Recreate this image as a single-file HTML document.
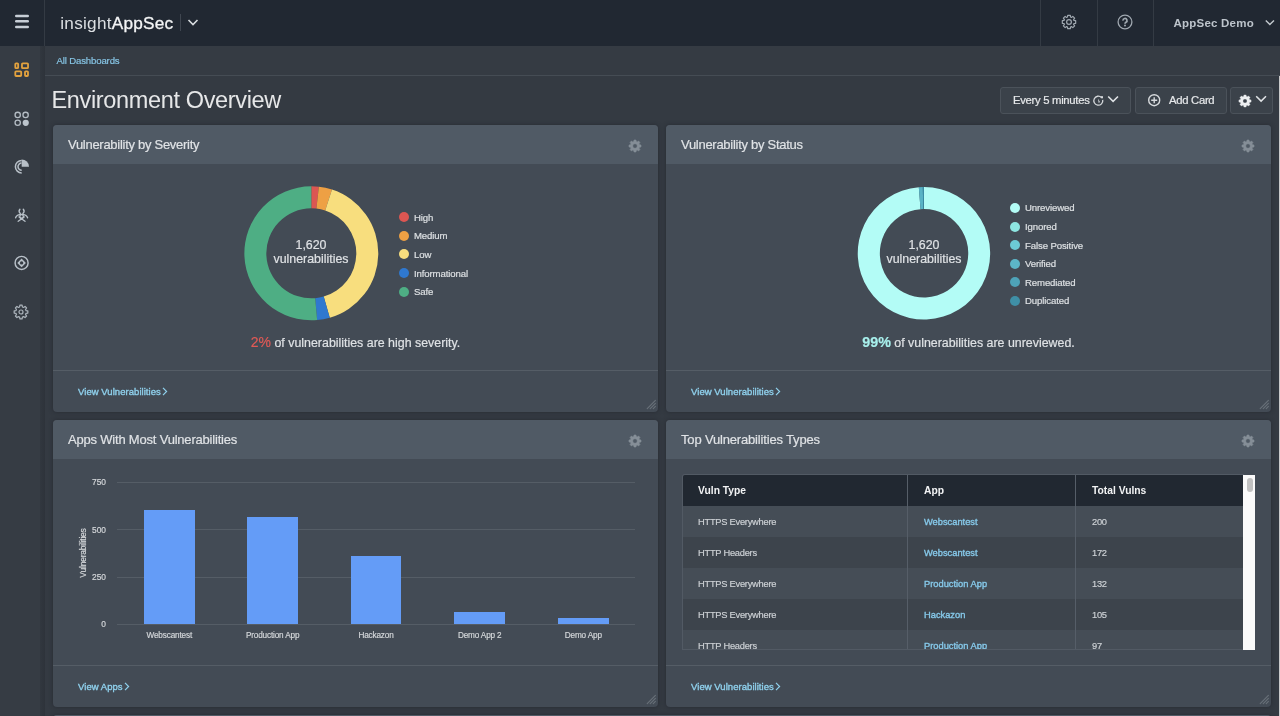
<!DOCTYPE html>
<html><head><meta charset="utf-8">
<style>
*{box-sizing:border-box;margin:0;padding:0}
html,body{width:1280px;height:716px;overflow:hidden;background:#343a42;font-family:"Liberation Sans",sans-serif;color:#e4e6e8}
.abs{position:absolute}
#hdr{position:absolute;left:0;top:0;width:1280px;height:46px;background:#212832;z-index:2}
.vsep{position:absolute;top:0;width:1px;height:46px;background:#343b44}
#side{position:absolute;left:0;top:46px;width:45px;height:670px;background:#363c44}
#side:after{content:"";position:absolute;right:0;top:0;width:5px;height:100%;background:linear-gradient(to right,rgba(40,45,52,.3),rgba(40,45,52,.6))}
#crumb{position:absolute;left:45px;top:46px;width:1235px;height:29px;background:#353b43}
#crumbline{position:absolute;left:45px;top:75px;width:1235px;height:1px;background:#454c54}
.card{position:absolute;width:605px;height:287px;background:#434b55;border-radius:4px;overflow:hidden;box-shadow:0 0 4px rgba(30,34,40,.6)}
.ch{position:absolute;left:0;top:0;width:100%;height:39px;background:#505a65}
.ct{position:absolute;left:15px;top:12.3px;font-size:13px;letter-spacing:-0.28px;color:#e0e3e6;white-space:nowrap}
.fl{position:absolute;left:0;top:245px;width:100%;height:1px;background:#555d66}
.lnk{position:absolute;left:25px;top:261px;font-size:9.5px;font-weight:400;letter-spacing:0.05px;-webkit-text-stroke:0.35px #8fd0ec;color:#8fd0ec;white-space:nowrap;line-height:11px}
.lnk svg{position:relative;top:1px;margin-left:1.4px}
.rh{position:absolute;left:593.3px;top:274px}
.cg{position:absolute;left:575px;top:13.6px}
.btn{position:absolute;top:87px;height:27px;background:#3b424a;border:1px solid #4b525a;border-radius:3px}
.txt{position:absolute;white-space:nowrap}
.ct,.ctr,.sum,.leg,.cell,.xl,.yl,.txt{-webkit-text-stroke:0.18px currentColor}
.dc{position:absolute;left:188px;top:58px}
.ctr{position:absolute;left:158px;top:113px;width:200px;text-align:center;font-size:12.4px;line-height:14px;color:#dfe2e5}
.leg{position:absolute;font-size:9.6px;letter-spacing:-0.12px;color:#dde0e3;white-space:nowrap;line-height:12px}
.leg i{position:absolute;left:-15px;top:0.6px;width:10px;height:10px;border-radius:50%}
.sum{position:absolute;left:0;width:605px;top:208.5px;text-align:center;font-size:12.4px;color:#dfe2e5;white-space:nowrap}
.grid{position:absolute;left:64px;width:518px;height:1px;background:#555d66}
.yl{position:absolute;left:20px;width:33px;text-align:right;font-size:8.4px;color:#d4d7da;line-height:10px}
.bar{position:absolute;width:50.5px;background:#649cf7}
.xl{position:absolute;width:104px;text-align:center;font-size:8.2px;letter-spacing:-0.15px;color:#d4d7da;line-height:10px;top:211px}
.row{position:absolute;left:17px;width:560px;height:31px}
.cell{position:absolute;font-size:9.3px;letter-spacing:-0.25px;color:#cdd1d5;white-space:nowrap;line-height:12px}
.cell.a{font-weight:400;color:#86c9ea;letter-spacing:0;-webkit-text-stroke:0.35px #86c9ea}
.th{position:absolute;font-size:10.3px;font-weight:700;color:#f2f3f4;white-space:nowrap;line-height:12px;top:10.2px}
</style></head><body><div id="root" style="position:absolute;left:0;top:0;width:1280px;height:716px;overflow:hidden;will-change:transform">
<!-- header -->
<div id="hdr">
  <svg class="abs" style="left:14px;top:13px" width="16" height="17" viewBox="0 0 16 17">
    <g stroke="#c7ced6" stroke-width="2.4" stroke-linecap="round"><line x1="2.2" y1="3" x2="13.8" y2="3"/><line x1="2.2" y1="8.2" x2="13.8" y2="8.2"/><line x1="2.2" y1="14" x2="13.8" y2="14"/></g>
  </svg>
  <div class="vsep" style="left:44px"></div>
  <div class="txt" style="left:60.3px;top:12.5px;font-size:17.2px;color:#dcdfe2;letter-spacing:0.25px"><span style="font-weight:400;-webkit-text-stroke:0">insight</span><span style="-webkit-text-stroke:0.3px #f4f5f6;color:#f4f5f6">AppSec</span></div>
  <div class="abs" style="left:180px;top:14px;width:1px;height:17px;background:#3f4650"></div>
  <svg class="abs" style="left:187px;top:18px" width="12" height="9" viewBox="0 0 12 9"><polyline points="1.5,2 6,6.5 10.5,2" fill="none" stroke="#d8dce0" stroke-width="1.6"/></svg>
  <div class="vsep" style="left:1040px"></div>
  <svg class="abs" style="left:1060.6px;top:14.3px" width="16" height="16" viewBox="0 0 16 16"><path d="M6.48 3.03L6.70 1.32L9.30 1.32L9.52 3.03L10.44 3.41L11.80 2.36L13.64 4.20L12.59 5.56L12.97 6.48L14.68 6.70L14.68 9.30L12.97 9.52L12.59 10.44L13.64 11.80L11.80 13.64L10.44 12.59L9.52 12.97L9.30 14.68L6.70 14.68L6.48 12.97L5.56 12.59L4.20 13.64L2.36 11.80L3.41 10.44L3.03 9.52L1.32 9.30L1.32 6.70L3.03 6.48L3.41 5.56L2.36 4.20L4.20 2.36L5.56 3.41Z" fill="none" stroke="#a0a8b0" stroke-width="1.2" stroke-linejoin="round"/><circle cx="8" cy="8" r="2.4" fill="none" stroke="#a0a8b0" stroke-width="1.2"/></svg>
  <div class="vsep" style="left:1097px"></div>
  <svg class="abs" style="left:1117.2px;top:14.3px" width="16" height="16" viewBox="0 0 16 16"><circle cx="8" cy="8" r="6.9" fill="none" stroke="#a0a8b0" stroke-width="1.3"/><path d="M6 6.6a2 2 0 1 1 3 1.6c-.7.4-1 .8-1 1.6" fill="none" stroke="#a0a8b0" stroke-width="1.7"/><circle cx="8" cy="11.6" r="1" fill="#a0a8b0"/></svg>
  <div class="vsep" style="left:1153px"></div>
  <div class="txt" style="left:1173.5px;top:16.8px;font-size:11.5px;font-weight:700;letter-spacing:0.22px;color:#bdc4cb;-webkit-text-stroke:0">AppSec Demo</div>
  <svg class="abs" style="left:1264px;top:18px" width="12" height="9" viewBox="0 0 12 9"><polyline points="1.8,2.4 5.9,6.4 10,2.4" fill="none" stroke="#c3c9ce" stroke-width="1.4"/></svg>
</div>
<div id="side">
  <svg class="abs" style="left:13px;top:15px" width="18" height="18" viewBox="0 0 18 18"><g fill="none" stroke="#e3a23e" stroke-width="1.8"><rect x="2.3" y="2.3" width="2.85" height="4.9" rx="0.8"/><rect x="8.96" y="2.3" width="6.08" height="4.9" rx="0.8"/><rect x="2.3" y="10.3" width="5.9" height="4.7" rx="0.8"/><rect x="12" y="10.3" width="3.0" height="4.7" rx="0.8"/></g></svg>
  <svg class="abs" style="left:13px;top:63.6px" width="18" height="18" viewBox="0 0 18 18"><g fill="none" stroke="#b4bcc4" stroke-width="1.3"><circle cx="4.7" cy="4.9" r="2.65"/><circle cx="12.6" cy="4.9" r="2.65"/><circle cx="4.7" cy="12.8" r="2.65"/></g><circle cx="12.75" cy="12.8" r="3.1" fill="#bcc4cc"/></svg>
  <svg class="abs" style="left:13px;top:113px" width="18" height="18" viewBox="0 0 18 18"><path d="M8.7 7.7V0.4A7.3 7.3 0 0 1 16 7.7Z" fill="#b8c0c8"/><g fill="none" stroke="#b8c0c8" stroke-width="1.5"><path d="M8.7 1.4A6.3 6.3 0 0 0 8.7 14"/><path d="M8.5 4.1A3.6 3.6 0 0 0 8.7 11.3"/></g></svg>
  <svg class="abs" style="left:13px;top:161px" width="18" height="18" viewBox="0 0 18 18"><g fill="none" stroke="#b8c0c8" stroke-width="1.35" stroke-linecap="round"><path d="M6.9 2.3C5.9 3.5 6.1 5.4 7.3 6.5"/><path d="M10.3 2.3C11.3 3.5 11.1 5.4 9.9 6.5"/><path d="M2.6 10.8C3.2 8.7 5.4 7.3 8.6 7.3C11.8 7.3 14 8.7 14.6 10.8"/><circle cx="8.6" cy="9.4" r="1.8"/><path d="M5.2 14.3L11.2 10M12 14.3L6 10"/></g></svg>
  <svg class="abs" style="left:13px;top:208px" width="18" height="18" viewBox="0 0 18 18"><circle cx="8.6" cy="8.9" r="6.5" fill="none" stroke="#b8c0c8" stroke-width="1.45"/><path d="M8.6 4.6L12.9 8.9L8.6 13.2L4.3 8.9Z" fill="#b8c0c8"/><circle cx="8.6" cy="8.9" r="1.7" fill="#363c44"/></svg>
  <svg class="abs" style="left:13.2px;top:258px" width="16" height="16" viewBox="0 0 16 16"><path d="M6.57 3.00L6.92 1.18L9.08 1.18L9.43 3.00L10.52 3.45L12.06 2.42L13.58 3.94L12.55 5.48L13.00 6.57L14.82 6.92L14.82 9.08L13.00 9.43L12.55 10.52L13.58 12.06L12.06 13.58L10.52 12.55L9.43 13.00L9.08 14.82L6.92 14.82L6.57 13.00L5.48 12.55L3.94 13.58L2.42 12.06L3.45 10.52L3.00 9.43L1.18 9.08L1.18 6.92L3.00 6.57L3.45 5.48L2.42 3.94L3.94 2.42L5.48 3.45Z" fill="none" stroke="#abb3bb" stroke-width="1.25" stroke-linejoin="round"/><circle cx="8" cy="8" r="2.0" fill="none" stroke="#abb3bb" stroke-width="1.2"/></svg>
</div>
<div id="crumb"></div>
<div id="crumbline"></div>
<div class="txt" style="left:56.5px;top:55px;font-size:9.6px;letter-spacing:-0.15px;color:#86c4e4">All Dashboards</div>
<div class="txt" style="left:51.5px;top:87px;font-size:23.5px;letter-spacing:-0.35px;color:#e6e7e8;-webkit-text-stroke:0">Environment Overview</div>

<!-- buttons -->
<div class="btn" style="left:1000px;width:131px"></div>
<div class="txt" style="left:1013px;top:94px;font-size:11.3px;letter-spacing:-0.3px;color:#e6e8ea;-webkit-text-stroke:0.2px #e6e8ea">Every 5 minutes</div>
<svg class="abs" style="left:1092px;top:94px" width="13" height="13" viewBox="0 0 13 13"><path d="M10.73 5.92A4.5 4.5 0 1 1 9.48 3.52" fill="none" stroke="#d6d9dc" stroke-width="1.3"/><rect x="8.9" y="2.2" width="2.1" height="2.1" fill="#d6d9dc"/><path d="M5.9 4.6L8 8.1L6.7 8.9Z" fill="#d6d9dc"/></svg>
<svg class="abs" style="left:1107px;top:95px" width="13" height="9" viewBox="0 0 13 9"><polyline points="1.2,1.5 6.1,6.4 11,1.5" fill="none" stroke="#e0e3e6" stroke-width="1.5"/></svg>
<div class="btn" style="left:1135px;width:92px"></div>
<svg class="abs" style="left:1147px;top:93px" width="15" height="15" viewBox="0 0 15 15"><circle cx="7.2" cy="7.2" r="5.5" fill="none" stroke="#d6d9dc" stroke-width="1.4"/><path d="M7.2 4.2V10.2M4.2 7.2H10.2" stroke="#d6d9dc" stroke-width="1.4"/></svg>
<div class="txt" style="left:1169px;top:94px;font-size:11.3px;letter-spacing:-0.3px;color:#e6e8ea;-webkit-text-stroke:0.2px #e6e8ea">Add Card</div>
<div class="btn" style="left:1230px;width:43px"></div>
<svg class="abs" style="left:1237.6px;top:93.6px" width="14" height="14" viewBox="0 0 14 14"><path d="M5.55 2.53L5.92 0.89L8.08 0.89L8.45 2.53L9.13 2.81L10.56 1.92L12.08 3.44L11.19 4.87L11.47 5.55L13.11 5.92L13.11 8.08L11.47 8.45L11.19 9.13L12.08 10.56L10.56 12.08L9.13 11.19L8.45 11.47L8.08 13.11L5.92 13.11L5.55 11.47L4.87 11.19L3.44 12.08L1.92 10.56L2.81 9.13L2.53 8.45L0.89 8.08L0.89 5.92L2.53 5.55L2.81 4.87L1.92 3.44L3.44 1.92L4.87 2.81ZM4.90 7.00a2.1 2.1 0 1 0 4.20 0a2.1 2.1 0 1 0 -4.20 0Z" fill="#eceef0" stroke="#eceef0" stroke-width="0.3" stroke-linejoin="round" fill-rule="evenodd"/></svg>
<svg class="abs" style="left:1254.5px;top:95px" width="12" height="9" viewBox="0 0 12 9"><polyline points="1.2,1.2 6.1,6.1 11,1.2" fill="none" stroke="#e0e3e6" stroke-width="1.5"/></svg>

<!-- card 1 -->
<div class="card" style="left:53px;top:125px">
  <div class="ch"></div>
  <div class="ct">Vulnerability by Severity</div>
  <svg class="cg" width="14" height="14" viewBox="0 0 14 14"><path d="M5.66 2.60L6.05 0.98L7.95 0.98L8.34 2.60L9.16 2.94L10.59 2.06L11.94 3.41L11.06 4.84L11.40 5.66L13.02 6.05L13.02 7.95L11.40 8.34L11.06 9.16L11.94 10.59L10.59 11.94L9.16 11.06L8.34 11.40L7.95 13.02L6.05 13.02L5.66 11.40L4.84 11.06L3.41 11.94L2.06 10.59L2.94 9.16L2.60 8.34L0.98 7.95L0.98 6.05L2.60 5.66L2.94 4.84L2.06 3.41L3.41 2.06L4.84 2.94ZM4.70 7.00a2.3 2.3 0 1 0 4.60 0a2.3 2.3 0 1 0 -4.60 0Z" fill="#858e97" stroke="#858e97" stroke-width="0.6" stroke-linejoin="round" fill-rule="evenodd"/></svg>
  <svg class="dc" width="141" height="141" viewBox="0 0 141 141"><path d="M70.30 3.30A67.0 67.0 0 0 1 77.88 3.73L75.39 25.59A45.0 45.0 0 0 0 70.30 25.30Z" fill="#dc5652"/><path d="M77.88 3.73A67.0 67.0 0 0 1 91.00 6.58L84.21 27.50A45.0 45.0 0 0 0 75.39 25.59Z" fill="#eea044"/><path d="M91.00 6.58A67.0 67.0 0 0 1 88.77 134.70L82.70 113.56A45.0 45.0 0 0 0 84.21 27.50Z" fill="#f8de7e"/><path d="M88.77 134.70A67.0 67.0 0 0 1 76.14 137.05L74.22 115.13A45.0 45.0 0 0 0 82.70 113.56Z" fill="#2f78cf"/><path d="M76.14 137.05A67.0 67.0 0 1 1 70.30 3.30L70.30 25.30A45.0 45.0 0 1 0 74.22 115.13Z" fill="#4eae84"/></svg>
  <div class="ctr">1,620<br>vulnerabilities</div>
  <div class="leg" style="left:361px;top:86.8px"><i style="background:#dc5652"></i>High</div>
  <div class="leg" style="left:361px;top:105.3px"><i style="background:#eea044"></i>Medium</div>
  <div class="leg" style="left:361px;top:123.8px"><i style="background:#f8de7e"></i>Low</div>
  <div class="leg" style="left:361px;top:142.5px"><i style="background:#2f78cf"></i>Informational</div>
  <div class="leg" style="left:361px;top:161.0px"><i style="background:#4eae84"></i>Safe</div>
  <div class="sum"><span style="font-size:14px;color:#e05a56">2%</span> of vulnerabilities are high severity.</div>
  <div class="fl"></div>
  <div class="lnk">View Vulnerabilities<svg width="6" height="9" viewBox="0 0 6 9"><polyline points="1,0.8 4.6,4.5 1,8.2" fill="none" stroke="#8fd0ec" stroke-width="1.2"/></svg></div>
  <svg class="rh" width="11" height="11" viewBox="0 0 11 11"><g stroke="#697179" stroke-width="1.1" stroke-linecap="round"><line x1="1.2" y1="9.6" x2="9.4" y2="1.4"/><line x1="4.2" y1="9.6" x2="9.4" y2="4.4"/><line x1="7.2" y1="9.6" x2="9.4" y2="7.4"/></g></svg>
</div>
<!-- card 2 -->
<div class="card" style="left:666px;top:125px">
  <div class="ch"></div>
  <div class="ct">Vulnerability by Status</div>
  <svg class="cg" width="14" height="14" viewBox="0 0 14 14"><path d="M5.66 2.60L6.05 0.98L7.95 0.98L8.34 2.60L9.16 2.94L10.59 2.06L11.94 3.41L11.06 4.84L11.40 5.66L13.02 6.05L13.02 7.95L11.40 8.34L11.06 9.16L11.94 10.59L10.59 11.94L9.16 11.06L8.34 11.40L7.95 13.02L6.05 13.02L5.66 11.40L4.84 11.06L3.41 11.94L2.06 10.59L2.94 9.16L2.60 8.34L0.98 7.95L0.98 6.05L2.60 5.66L2.94 4.84L2.06 3.41L3.41 2.06L4.84 2.94ZM4.70 7.00a2.3 2.3 0 1 0 4.60 0a2.3 2.3 0 1 0 -4.60 0Z" fill="#858e97" stroke="#858e97" stroke-width="0.6" stroke-linejoin="round" fill-rule="evenodd"/></svg>
  <svg class="dc" width="141" height="141" viewBox="0 0 141 141"><path d="M70.00 4.10A66.2 66.2 0 1 1 64.81 4.30L66.53 26.24A44.2 44.2 0 1 0 70.00 26.10Z" fill="#b3fcf6"/><path d="M64.81 4.30A66.2 66.2 0 0 1 68.84 4.11L69.23 26.11A44.2 44.2 0 0 0 66.53 26.24Z" fill="#58b3c6"/><path d="M68.84 4.11A66.2 66.2 0 0 1 70.00 4.10L70.00 26.10A44.2 44.2 0 0 0 69.23 26.11Z" fill="#3a8ca6"/></svg>
  <div class="ctr">1,620<br>vulnerabilities</div>
  <div class="leg" style="left:359px;top:77.4px"><i style="background:#b3fcf6"></i>Unreviewed</div>
  <div class="leg" style="left:359px;top:96.1px"><i style="background:#8ee6e2"></i>Ignored</div>
  <div class="leg" style="left:359px;top:114.6px"><i style="background:#6ccad6"></i>False Positive</div>
  <div class="leg" style="left:359px;top:133.0px"><i style="background:#5cb6c8"></i>Verified</div>
  <div class="leg" style="left:359px;top:151.6px"><i style="background:#4ea3b8"></i>Remediated</div>
  <div class="leg" style="left:359px;top:170.4px"><i style="background:#3f8fa6"></i>Duplicated</div>
  <div class="sum"><span style="font-size:14.3px;font-weight:700;color:#a8f0ec">99%</span> of vulnerabilities are unreviewed.</div>
  <div class="fl"></div>
  <div class="lnk">View Vulnerabilities<svg width="6" height="9" viewBox="0 0 6 9"><polyline points="1,0.8 4.6,4.5 1,8.2" fill="none" stroke="#8fd0ec" stroke-width="1.2"/></svg></div>
  <svg class="rh" width="11" height="11" viewBox="0 0 11 11"><g stroke="#697179" stroke-width="1.1" stroke-linecap="round"><line x1="1.2" y1="9.6" x2="9.4" y2="1.4"/><line x1="4.2" y1="9.6" x2="9.4" y2="4.4"/><line x1="7.2" y1="9.6" x2="9.4" y2="7.4"/></g></svg>
</div>
<!-- card 3 -->
<div class="card" style="left:53px;top:420px">
  <div class="ch"></div>
  <div class="ct" style="letter-spacing:-0.2px">Apps With Most Vulnerabilities</div>
  <svg class="cg" width="14" height="14" viewBox="0 0 14 14"><path d="M5.66 2.60L6.05 0.98L7.95 0.98L8.34 2.60L9.16 2.94L10.59 2.06L11.94 3.41L11.06 4.84L11.40 5.66L13.02 6.05L13.02 7.95L11.40 8.34L11.06 9.16L11.94 10.59L10.59 11.94L9.16 11.06L8.34 11.40L7.95 13.02L6.05 13.02L5.66 11.40L4.84 11.06L3.41 11.94L2.06 10.59L2.94 9.16L2.60 8.34L0.98 7.95L0.98 6.05L2.60 5.66L2.94 4.84L2.06 3.41L3.41 2.06L4.84 2.94ZM4.70 7.00a2.3 2.3 0 1 0 4.60 0a2.3 2.3 0 1 0 -4.60 0Z" fill="#858e97" stroke="#858e97" stroke-width="0.6" stroke-linejoin="round" fill-rule="evenodd"/></svg>
  <div class="grid" style="top:62px"></div>
  <div class="grid" style="top:109px"></div>
  <div class="grid" style="top:157px"></div>
  <div class="grid" style="top:204px"></div>
  <div class="yl" style="top:57px">750</div>
  <div class="yl" style="top:104.5px">500</div>
  <div class="yl" style="top:152px">250</div>
  <div class="yl" style="top:199px">0</div>
  <div class="txt" style="left:30px;top:133px;transform:translate(-50%,-50%) rotate(-90deg);font-size:8.5px;letter-spacing:-0.22px;color:#d4d7da;line-height:10px">Vulnerabilities</div>
  <div class="bar" style="left:91px;top:89.6px;height:114.4px"></div>
  <div class="bar" style="left:194.3px;top:97.2px;height:106.8px"></div>
  <div class="bar" style="left:297.7px;top:135.5px;height:68.5px"></div>
  <div class="bar" style="left:401.4px;top:192px;height:12px"></div>
  <div class="bar" style="left:505px;top:198.4px;height:5.6px"></div>
  <div class="xl" style="left:64.3px">Webscantest</div>
  <div class="xl" style="left:167.6px">Production App</div>
  <div class="xl" style="left:271px">Hackazon</div>
  <div class="xl" style="left:374.7px">Demo App 2</div>
  <div class="xl" style="left:478.3px">Demo App</div>
  <div class="fl"></div>
  <div class="lnk">View Apps<svg width="6" height="9" viewBox="0 0 6 9"><polyline points="1,0.8 4.6,4.5 1,8.2" fill="none" stroke="#8fd0ec" stroke-width="1.2"/></svg></div>
  <svg class="rh" width="11" height="11" viewBox="0 0 11 11"><g stroke="#697179" stroke-width="1.1" stroke-linecap="round"><line x1="1.2" y1="9.6" x2="9.4" y2="1.4"/><line x1="4.2" y1="9.6" x2="9.4" y2="4.4"/><line x1="7.2" y1="9.6" x2="9.4" y2="7.4"/></g></svg>
</div>
<!-- card 4 -->
<div class="card" style="left:666px;top:420px">
  <div class="ch"></div>
  <div class="ct" style="letter-spacing:-0.17px">Top Vulnerabilities Types</div>
  <svg class="cg" width="14" height="14" viewBox="0 0 14 14"><path d="M5.66 2.60L6.05 0.98L7.95 0.98L8.34 2.60L9.16 2.94L10.59 2.06L11.94 3.41L11.06 4.84L11.40 5.66L13.02 6.05L13.02 7.95L11.40 8.34L11.06 9.16L11.94 10.59L10.59 11.94L9.16 11.06L8.34 11.40L7.95 13.02L6.05 13.02L5.66 11.40L4.84 11.06L3.41 11.94L2.06 10.59L2.94 9.16L2.60 8.34L0.98 7.95L0.98 6.05L2.60 5.66L2.94 4.84L2.06 3.41L3.41 2.06L4.84 2.94ZM4.70 7.00a2.3 2.3 0 1 0 4.60 0a2.3 2.3 0 1 0 -4.60 0Z" fill="#858e97" stroke="#858e97" stroke-width="0.6" stroke-linejoin="round" fill-rule="evenodd"/></svg>
  <div class="abs" style="left:16px;top:54px;width:562px;height:176px;border:1px solid #525a64;border-right:none;border-radius:3px 0 0 0;overflow:hidden;background:#444c55">
    <div class="row" style="left:0;top:0;height:31px;background:#212831"><div class="th" style="left:15px">Vuln Type</div><div class="th" style="left:241px">App</div><div class="th" style="left:409px">Total Vulns</div></div>
    <div class="row" style="left:0;top:31px;background:#454d56"><div class="cell" style="left:15px;top:10px">HTTPS Everywhere</div><div class="cell a" style="left:241px;top:10px">Webscantest</div><div class="cell" style="left:409px;top:10px">200</div></div>
    <div class="row" style="left:0;top:62px;background:#3d444c"><div class="cell" style="left:15px;top:10px">HTTP Headers</div><div class="cell a" style="left:241px;top:10px">Webscantest</div><div class="cell" style="left:409px;top:10px">172</div></div>
    <div class="row" style="left:0;top:93px;background:#454d56"><div class="cell" style="left:15px;top:10px">HTTPS Everywhere</div><div class="cell a" style="left:241px;top:10px">Production App</div><div class="cell" style="left:409px;top:10px">132</div></div>
    <div class="row" style="left:0;top:124px;background:#3d444c"><div class="cell" style="left:15px;top:10px">HTTPS Everywhere</div><div class="cell a" style="left:241px;top:10px">Hackazon</div><div class="cell" style="left:409px;top:10px">105</div></div>
    <div class="row" style="left:0;top:155px;background:#454d56"><div class="cell" style="left:15px;top:10px">HTTP Headers</div><div class="cell a" style="left:241px;top:10px">Production App</div><div class="cell" style="left:409px;top:10px">97</div></div>
    <div class="abs" style="left:224px;top:0;width:1px;height:176px;background:#565e68"></div>
    <div class="abs" style="left:392px;top:0;width:1px;height:176px;background:#565e68"></div>
  </div>
  <div class="abs" style="left:577px;top:55px;width:12.2px;height:175px;background:#fafafa"></div>
  <div class="abs" style="left:580.5px;top:58px;width:6px;height:14px;background:#c1c1c1;border-radius:3px"></div>
  <div class="fl"></div>
  <div class="lnk">View Vulnerabilities<svg width="6" height="9" viewBox="0 0 6 9"><polyline points="1,0.8 4.6,4.5 1,8.2" fill="none" stroke="#8fd0ec" stroke-width="1.2"/></svg></div>
  <svg class="rh" width="11" height="11" viewBox="0 0 11 11"><g stroke="#697179" stroke-width="1.1" stroke-linecap="round"><line x1="1.2" y1="9.6" x2="9.4" y2="1.4"/><line x1="4.2" y1="9.6" x2="9.4" y2="4.4"/><line x1="7.2" y1="9.6" x2="9.4" y2="7.4"/></g></svg>
</div>
<div class="card" style="left:53px;top:715px;height:20px;width:1218px"><div class="ch"></div></div>
<div class="abs" style="left:1279px;top:76px;width:1px;height:640px;background:#c9cacb"></div>
</div></body></html>
